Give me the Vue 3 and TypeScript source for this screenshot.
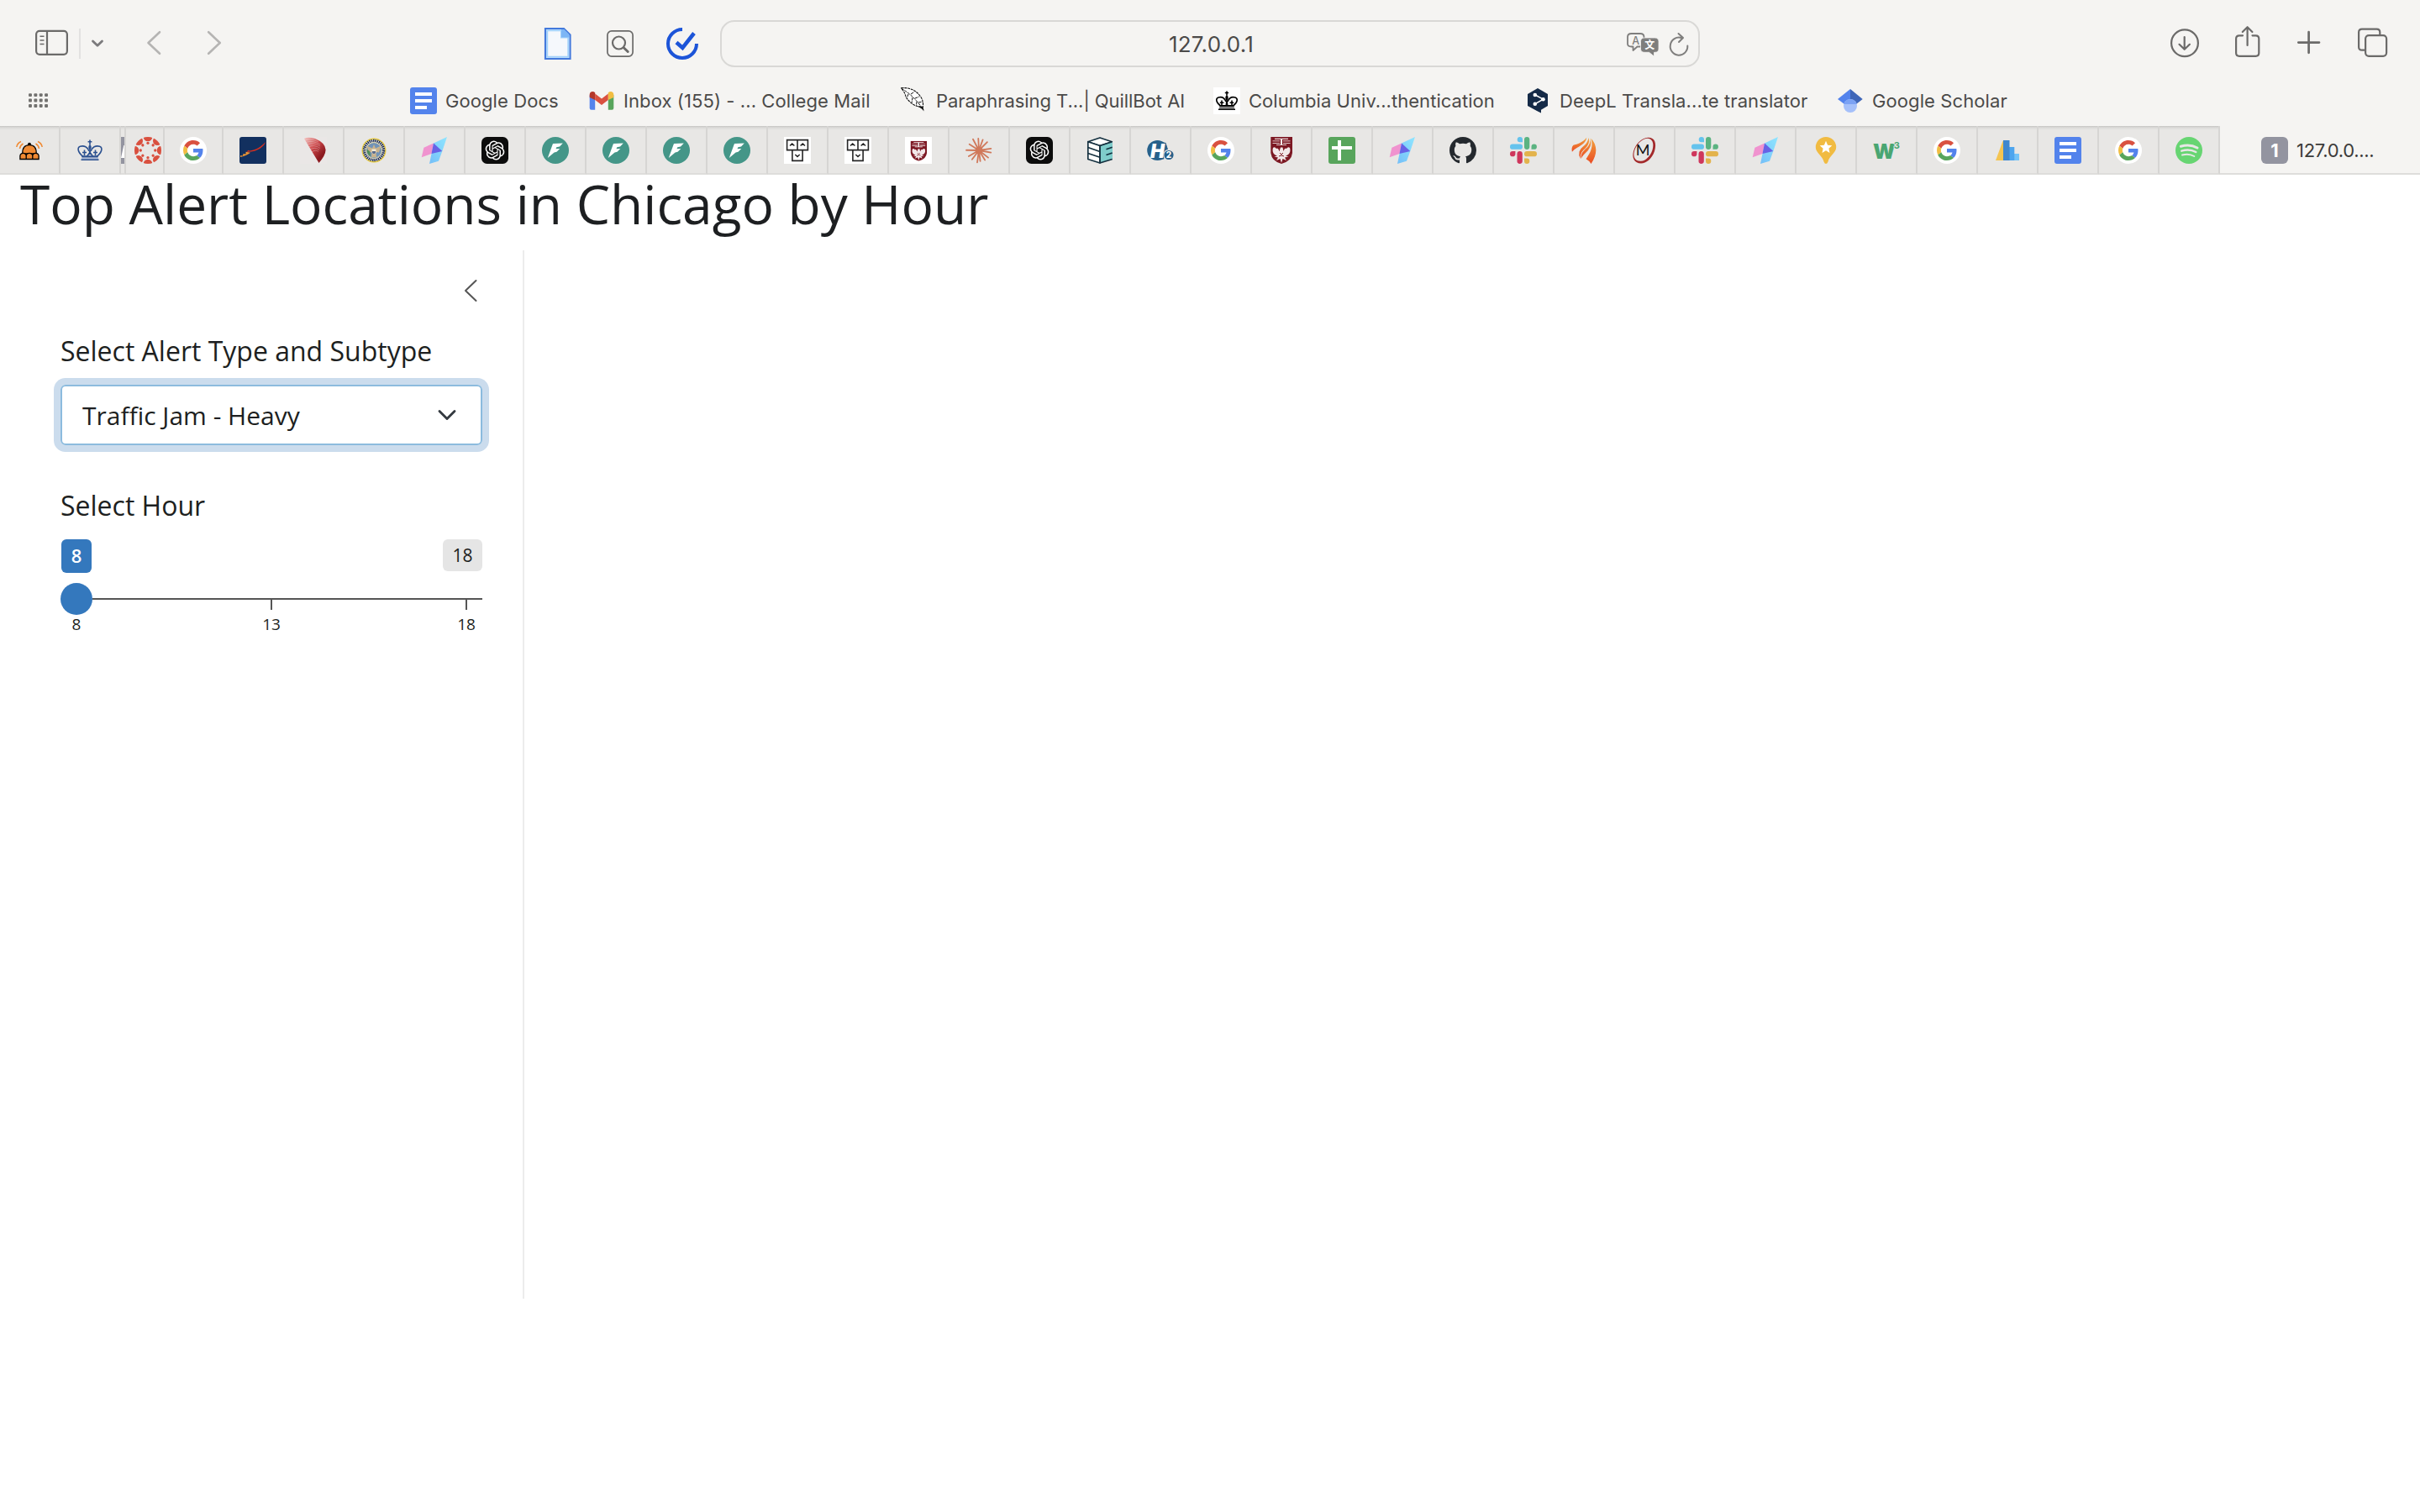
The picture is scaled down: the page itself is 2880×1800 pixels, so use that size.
<script setup lang="ts">
interface Tab {
  icon: string
  width: number
}
interface Bookmark {
  icon: string
  label: string
  spacing: number
}

const bookmarks: Bookmark[] = [
  { icon: 'docs', label: 'Google Docs', spacing: 0.08 },
  { icon: 'gmail', label: 'Inbox (155) - ... College Mail', spacing: 0.09 },
  { icon: 'quill', label: 'Paraphrasing T...| QuillBot AI', spacing: -0.05 },
  { icon: 'crown-black', label: 'Columbia Univ...thentication', spacing: 0.04 },
  { icon: 'deepl', label: 'DeepL Transla...te translator', spacing: 0.08 },
  { icon: 'scholar', label: 'Google Scholar', spacing: 0.1 },
]

const leading: Tab[] = [
  { icon: 'bell', width: 72 },
  { icon: 'crown', width: 72 },
  { icon: 'sliver', width: 6 },
  { icon: 'canvas', width: 46 },
  { icon: 'google', width: 70 },
]
const rest = [
  'navy', 'fan', 'seal', 'prism', 'openai', 'bolt', 'bolt', 'bolt', 'bolt', 'totem', 'totem',
  'chicago-white', 'burst', 'openai', 'cube', 'h2', 'google', 'chicago', 'sheet', 'prism', 'github',
  'slack', 'petals', 'ring', 'slack', 'prism', 'pin', 'w3', 'google', 'chart', 'docs', 'google', 'spotify',
]
const tabs: Tab[] = [...leading, ...rest.map((icon) => ({ icon, width: 72 }))]

const ring = [0, 45, 90, 135, 180, 225, 270, 315]
const rays: [number, number][] = [
  [-93, 14.5], [-70, 14], [-45, 14.5], [-8, 15], [10, 15], [38, 14.5], [58, 14],
  [83, 13.5], [98, 15], [127, 14], [150, 14.5], [181, 15.5], [213, 14], [242, 15.5],
]
const ticks = ['8', '13', '18']
</script>

<template>
  <svg class="defs" width="0" height="0">
    <defs>
      <linearGradient id="cy" x1="1" y1="0" x2="0" y2="1"><stop offset="0" stop-color="#8fe6ff" /><stop offset="1" stop-color="#74bff8" /></linearGradient>
      <linearGradient id="pe" x1="0" y1="0" x2="0" y2="1"><stop offset="0" stop-color="#f2a23c" /><stop offset="1" stop-color="#ea4c24" /></linearGradient>
      <linearGradient id="fa" x1="0.1" y1="0" x2="0.8" y2="0.7"><stop offset="0" stop-color="#f0b9b6" /><stop offset="0.5" stop-color="#cf4a4c" /><stop offset="1" stop-color="#8c1a20" /></linearGradient>
      <clipPath id="disc"><circle cx="16" cy="16" r="16" /></clipPath>
    </defs>
    <symbol id="bell" viewBox="0 0 32 32">
      <g fill="none" stroke="#f08a33" stroke-width="1.500"><path d="M.8 12Q1.500 7.500 6 5.500M4.500 14Q5 10 8.500 8M31.200 12Q30.500 7.500 26 5.500M27.500 14Q27 10 23.500 8" /></g>
      <circle cx="16" cy="8.700" r="2" />
      <path d="M7.800 20C7.500 13 10.500 9.600 16 9.600S24.500 13 24.200 20Z" fill="#f08a33" stroke="#000" stroke-width="1.300" />
      <path d="M4.900 26.500V22.500Q5.300 19.300 8.600 19.300T12.200 22.500Q12.500 19.300 16 19.300T19.800 22.500Q20 19.300 23.400 19.300T27.100 22.500V26.500ZM12.200 22V26.500M19.800 22V26.500" fill="#f08a33" stroke="#000" stroke-width="1.300" />
    </symbol>
    <symbol id="crown" viewBox="0 0 32 32">
      <g fill="none" stroke="#2c5190" stroke-width="1.600">
        <path d="M16 3.500V9M13.600 5.700H18.400M8 23.500C1 18 .8 12.500 4.500 11.300C9 10 13.500 12 15 17M24 23.500C31 18 31.200 12.500 27.500 11.300C23 10 18.500 12 17 17" />
        <path d="M9.500 15.500V22M7 18.500H12M22.500 15.500V22M20 18.500H25M12.500 23L16 18.500L19.500 23" />
      </g>
      <path d="M16 8.500Q19 12 16.800 15L17.200 21H14.800L15.200 15Q13 12 16 8.500Z" fill="#2c5190" />
      <path d="M6 22.200H26L25.500 24.500H6.500Z" fill="#2c5190" /><path d="M6 25H26V26.500H6Z" fill="#a9b9d8" /><path d="M5.500 26.400H26.500V28H5.500Z" fill="#2c5190" />
    </symbol>
    <symbol id="crown-black" viewBox="0 0 32 32">
      <rect width="32" height="32" fill="#fff" />
      <g fill="none" stroke="#000" stroke-width="1.600">
        <path d="M16 4.500V9M13.800 6.500H18.200M8.500 22C2.500 17.500 2.800 13 6 12C10 11 13.500 13 15 17M23.500 22C29.500 17.500 29.200 13 26 12C22 11 18.500 13 17 17" />
        <path d="M10 15.500V21.500M7.800 18.200H12.400M22 15.500V21.500M19.600 18.200H24.200" />
      </g>
      <path d="M16 8.500Q19 12 16.800 15L17.500 21.500H14.500L15.200 15Q13 12 16 8.500Z" />
      <path d="M7 21H25L24.500 23.200H7.500ZM7 24.200H25V25H7ZM6 25.600H26V27H6Z" />
    </symbol>
    <symbol id="canvas" viewBox="0 0 32 32">
      <g fill="#d9503f" clip-path="url(#disc)">
        <g v-for="a in ring" :key="a" :transform="`rotate(${a} 16 16)`"><circle cx="16" cy="0" r="5.300" /><circle cx="16" cy="7.300" r="1.650" /></g>
      </g>
    </symbol>
    <symbol id="google" viewBox="0 0 32 32">
      <circle cx="16" cy="16" r="16" fill="#fff" />
      <g transform="translate(4 4) scale(.5)">
        <path fill="#d95140" d="M24 9.500c3.540 0 6.710 1.220 9.210 3.600l6.850-6.850C35.900 2.380 30.470 0 24 0 14.620 0 6.510 5.380 2.560 13.220l7.980 6.190C12.430 13.720 17.740 9.500 24 9.500z" />
        <path fill="#5383ec" d="M46.980 24.550c0-1.570-.15-3.090-.38-4.550H24v9.020h12.940c-.58 2.960-2.260 5.480-4.780 7.180l7.730 6c4.510-4.180 7.090-10.360 7.090-17.650z" />
        <path fill="#f1bd42" d="M10.530 28.590c-.48-1.450-.76-2.990-.76-4.590s.27-3.140.76-4.590l-7.980-6.190C.92 16.460 0 20.120 0 24c0 3.880.92 7.540 2.560 10.780l7.970-6.190z" />
        <path fill="#58a55c" d="M24 48c6.480 0 11.930-2.130 15.890-5.810l-7.730-6c-2.150 1.450-4.920 2.300-8.160 2.300-6.260 0-11.570-4.220-13.470-9.910l-7.980 6.190C6.510 42.620 14.620 48 24 48z" />
      </g>
    </symbol>
    <symbol id="navy" viewBox="0 0 32 32">
      <rect width="32" height="32" rx="3" fill="#12305f" />
      <path d="M31 6C29.500 11 22 18.200 8.500 17.800L10.500 15.800L12 16.600C20 15.500 26 11.500 31 6Z" fill="#d8301f" />
      <path d="M1 24V22L4 22.500L4.500 20L7.500 20.500L7.500 17.800L13 18.800Q9 22 1 24Z" fill="#ec9433" />
    </symbol>
    <symbol id="fan" viewBox="0 0 32 32">
      <rect width="32" height="32" fill="#eae7e6" />
      <path d="M5 2Q9 -.5 18 2Q30 7 30.500 15Q31 21 22.500 31Z" fill="url(#fa)" />
      <g fill="none" stroke="#eae7e6" stroke-width=".6" opacity=".55"><path d="M6 4Q14 1 22 6M7 6.500Q15 3.500 24 9M9 9Q16 6 24 11M10 12Q17 8.500 24 13.500M12 15Q18 11.500 23 15.500M14 18Q19 14.500 22 17.500" /></g>
    </symbol>
    <symbol id="seal" viewBox="0 0 32 32">
      <circle cx="16" cy="16" r="13.700" fill="#fff" stroke="#e6c83c" stroke-width="1.500" />
      <circle cx="16" cy="16" r="11.500" fill="none" stroke="#1d2b4d" stroke-width="3.400" stroke-dasharray="1.500 .8" />
      <circle cx="16" cy="16" r="9.300" fill="#7193b8" stroke="#d8c98a" stroke-width=".8" />
      <path d="M7.500 10.500L14 13.500L16 9L18 13.500L24.500 10.500L22 18.500L18.500 18L19 24H13L13.500 18L10 18.500Z" fill="#c9b38d" />
      <path d="M13.500 14.500H18.500V18.500L16 21L13.500 18.500Z" fill="#f1ead8" /><path d="M14 17H18V19L16 20.500L14 19Z" fill="#5a6b8c" />
      <path d="M7.500 15Q8 21 12 23L11 17Z" fill="#4f8d55" />
    </symbol>
    <symbol id="prism" viewBox="0 0 32 32">
      <path d="M15 7.500L31 0L25.300 17L21 28.800L10 32L12.500 20Z" fill="url(#cy)" />
      <path d="M.7 24.300L3.400 12.700L15 7.500L12.500 20Z" fill="#f093cf" />
      <path d="M15 7.500L25.300 17L12.500 20Z" fill="#6662e6" />
    </symbol>
    <symbol id="openai" viewBox="0 0 32 32">
      <rect width="32" height="32" rx="6.500" fill="#0c0c0c" />
      <path transform="translate(4.600 4.600) scale(.95)" fill="#fff" d="M22.2819 9.8211a5.9847 5.9847 0 0 0-.5157-4.9108 6.0462 6.0462 0 0 0-6.5098-2.9A6.0651 6.0651 0 0 0 4.9807 4.1818a5.9847 5.9847 0 0 0-3.9977 2.9 6.0462 6.0462 0 0 0 .7427 7.0966 5.98 5.98 0 0 0 .511 4.9107 6.051 6.051 0 0 0 6.5146 2.9001A5.9847 5.9847 0 0 0 13.2599 24a6.0557 6.0557 0 0 0 5.7718-4.2058 5.9894 5.9894 0 0 0 3.9977-2.9001 6.0557 6.0557 0 0 0-.7475-7.0729zm-9.022 12.6081a4.4755 4.4755 0 0 1-2.8764-1.0408l.1419-.0804 4.7783-2.7582a.7948.7948 0 0 0 .3927-.6813v-6.7369l2.02 1.1686a.071.071 0 0 1 .038.052v5.5826a4.504 4.504 0 0 1-4.4945 4.4944zm-9.6607-4.1254a4.4708 4.4708 0 0 1-.5346-3.0137l.142.0852 4.783 2.7582a.7712.7712 0 0 0 .7806 0l5.8428-3.3685v2.3324a.0804.0804 0 0 1-.0332.0615L9.74 19.9502a4.4992 4.4992 0 0 1-6.1408-1.6464zM2.3408 7.8956a4.485 4.485 0 0 1 2.3655-1.9728V11.6a.7664.7664 0 0 0 .3879.6765l5.8144 3.3543-2.0201 1.1685a.0757.0757 0 0 1-.071 0l-4.8303-2.7865A4.504 4.504 0 0 1 2.3408 7.872zm16.5963 3.8558L13.1038 8.364 15.1192 7.2a.0757.0757 0 0 1 .071 0l4.8303 2.7913a4.4944 4.4944 0 0 1-.6765 8.1042v-5.6772a.79.79 0 0 0-.407-.667zm2.0107-3.0231l-.142-.0852-4.7735-2.7818a.7759.7759 0 0 0-.7854 0L9.409 9.2297V6.8974a.0662.0662 0 0 1 .0284-.0615l4.8303-2.7866a4.4992 4.4992 0 0 1 6.6802 4.66zM8.3065 12.863l-2.02-1.1638a.0804.0804 0 0 1-.038-.0567V6.0742a4.4992 4.4992 0 0 1 7.3757-3.4537l-.142.0805L8.704 5.459a.7948.7948 0 0 0-.3927.6813zm1.0976-2.3654l2.602-1.4998 2.6069 1.4998v2.9994l-2.5974 1.4997-2.6067-1.4997Z" />
    </symbol>
    <symbol id="bolt" viewBox="0 0 32 32">
      <circle cx="16" cy="16" r="16" fill="#449688" />
      <path d="M13 8L24.800 7.600L21 11.600L17.300 12.200L16.500 14.200L21.300 13.900L17.500 17.700L14.600 18.400L6.800 25Z" fill="#fff" />
    </symbol>
    <symbol id="totem" viewBox="0 0 32 32">
      <rect width="32" height="32" fill="#fff" />
      <path d="M3.600 3.600H28.400V15.600H3.600ZM16 3.600V15.600M9.900 15.600V28.400H22.100V15.600M7 10.500L9.700 8L12.400 10.500M19.600 10.500L22.300 8L25 10.500M13.300 21L16 23.500L18.700 21" fill="none" stroke="#262626" stroke-width="1.600" />
    </symbol>
    <symbol id="chicago" viewBox="0 0 32 32">
      <path d="M3.300 0H29V19Q28 29 16 32Q4.500 29 3.300 19Z" fill="#7c1823" />
      <g fill="#fff"><path d="M8 1.800H24V2.800H8ZM5.500 4.500H14V5.300H5.500ZM18 4.500H26.500V5.300H18ZM5.500 7H14V7.800H5.500ZM18 7H26.500V7.800H18ZM10 9H22V9.800H10ZM15 3H17V9H15Z" />
        <path d="M6 13Q8 11 10 14Q12 12 13.500 17L15 12.500H17.500L18.500 17Q20 12 22 14Q24 11 26 13Q28 20 21 22.500L24.500 23.500L20 24.500L22 28L17.500 26L16 31L14.500 26L10 28L12 24.500L7.500 23.500L11 22.500Q4 20 6 13Z" opacity=".9" /></g>
      <path d="M14 19L16 21L18 19M13 23L16 22L19 23" stroke="#7c1823" fill="none" />
    </symbol>
    <symbol id="chicago-white" viewBox="0 0 32 32"><rect width="32" height="32" fill="#fff" /><use href="#chicago" x="4.300" y="4.800" width="24" height="24" /></symbol>
    <symbol id="burst" viewBox="0 0 32 32">
      <g stroke="#d0785a" stroke-width="1.800" stroke-linecap="round"><line v-for="[a, r] in rays" :key="a" x1="16" y1="16" :x2="16 + (r - 0.5) * Math.cos((a * Math.PI) / 180)" :y2="16 + (r - 0.5) * Math.sin((a * Math.PI) / 180)" /></g>
      <circle cx="16" cy="16" r="4.500" fill="#d0785a" />
    </symbol>
    <symbol id="cube" viewBox="0 0 32 32">
      <g stroke="#14303f" stroke-width="1.700" stroke-linejoin="round">
        <path d="M16 1L30.300 5.700L16 10.500L1.800 5.700Z" fill="#fff" />
        <path d="M1.800 5.700L16 10.500V31L1.800 26.500Z" fill="#fff" />
      </g>
      <path d="M16.800 10.700L31 6.200V26.500L16.800 31Z" fill="#7fcdcb" />
      <path d="M1.800 12.500L16 17.500M1.800 19.500L16 24.300M30.500 5.700L16 10.500V31L30.700 26.500M23.500 14.800L30.700 12.300M23.500 21.500L30.700 19" fill="none" stroke="#14303f" stroke-width="1.700" stroke-linejoin="round" />
    </symbol>
    <symbol id="sheet" viewBox="0 0 32 32"><rect width="32" height="32" rx="3" fill="#58a55c" /><path d="M11 4H15V11H28V15H15V28H11V15H4V11H11Z" fill="#fff" /></symbol>
    <symbol id="github" viewBox="0 0 16 16"><path fill="#24292e" d="M8 0C3.580 0 0 3.580 0 8c0 3.540 2.290 6.530 5.470 7.590.4.070.55-.17.55-.38 0-.19-.01-.82-.01-1.490-2.010.37-2.530-.49-2.690-.94-.09-.23-.48-.94-.82-1.130-.28-.15-.68-.52-.01-.53.63-.01 1.080.58 1.230.82.72 1.210 1.870.87 2.330.66.07-.52.28-.87.51-1.070-1.780-.2-3.640-.89-3.640-3.950 0-.87.31-1.590.82-2.150-.08-.2-.36-1.020.08-2.120 0 0 .67-.21 2.200.82.64-.18 1.320-.27 2-.27s1.360.09 2 .27c1.530-1.040 2.200-.82 2.200-.82.44 1.100.16 1.920.08 2.120.51.56.82 1.270.82 2.150 0 3.070-1.870 3.750-3.650 3.950.29.25.54.73.54 1.480 0 1.070-.01 1.930-.01 2.200 0 .21.15.46.55.38A8.010 8.010 0 0 0 16 8c0-4.420-3.580-8-8-8z" /></symbol>
    <symbol id="slack" viewBox="0 0 32 32">
      <g fill="#65c3ed"><path d="M15 6.300H11.700A3.150 3.150 0 1 1 15 3.150Z" /><rect y="8.500" width="15" height="6.300" rx="3.150" /></g>
      <g fill="#5bb381"><rect x="17" width="6.300" height="15" rx="3.150" /><path d="M25.500 14.800V11.650A3.200 3.150 0 1 1 28.700 14.800Z" /></g>
      <g fill="#cf375c"><path d="M6.400 17V20.150A3.200 3.150 0 1 1 3.200 17Z" /><rect x="8.500" y="17" width="6.300" height="15" rx="3.150" /></g>
      <g fill="#e3b34c"><rect x="17" y="17" width="15" height="6.300" rx="3.150" /><path d="M17 25.600H20.150A3.150 3.200 0 1 1 17 28.800Z" /></g>
    </symbol>
    <symbol id="petals" viewBox="0 0 32 32">
      <g fill="url(#pe)">
        <path d="M1.900 17.800C1.200 14.500 1.500 11.500 3.500 9.800C8 8.800 15 6.500 19.200 .8C18.500 7 13 10 8 12.800Q4 15 1.900 17.800Z" />
        <path d="M21.500 1C23.500 8 19.500 12 15.500 15.500Q11.500 19.500 11.800 25.800Q9.500 22 10.500 17.500Q11.500 14 15 11.500Q20.500 7.500 21.500 1Z" />
        <path d="M23 1.300C25.500 8 24 12 20.500 16.500C17 20 14 22.500 12.600 26Q11.800 20 16.500 15.700C21 11.500 24.500 8.500 23 1.300Z" />
        <path d="M24.500 1.800C32 10 32.500 20 24.500 32Q22.500 28.500 18.500 26.300C23.500 19 27.500 12.500 24.500 1.800Z" />
      </g>
    </symbol>
    <symbol id="pin" viewBox="0 0 32 32">
      <path d="M16 0A12.200 12.200 0 0 1 28.200 12.200C28.200 19 20 22.500 18.500 29.500Q17.500 32 16 32T13.500 29.500C12 22.500 3.800 19 3.800 12.200A12.200 12.200 0 0 1 16 0Z" fill="#f1bb41" />
      <path d="M16 4.800L18.100 9.700L23.300 10.200L19.400 13.700L20.500 18.900L16 16.200L11.500 18.900L12.600 13.700L8.700 10.200L13.900 9.700Z" fill="#fff" />
    </symbol>
    <symbol id="chart" viewBox="0 0 32 32"><path d="M10.500 5L11 4.500V28H2Z" fill="#f4c451" /><path d="M22 20H30V28H22Z" fill="#74c4f8" /><path d="M17 12H24.300V28H17Z" fill="#4da5ee" /><path d="M11 4H18.500V12V28H11Z" fill="#3f87cf" /></symbol>
    <symbol id="docs" viewBox="0 0 32 32"><rect width="32" height="32" rx="3" fill="#5383ec" /><path d="M6 6H26V10H6ZM6 14H26V18H6ZM6 22H20V26H6Z" fill="#fff" /></symbol>
    <symbol id="spotify" viewBox="0 0 32 32"><circle cx="16" cy="16" r="16" fill="#67d572" /><g fill="none" stroke="#e8e7e6" stroke-linecap="round"><path d="M6.300 11.300Q17 8 26 13" stroke-width="3" /><path d="M7.300 16.600Q16.500 13.700 24.300 18" stroke-width="2.500" /><path d="M8 21.500Q16 19.200 22.300 23" stroke-width="2" /></g></symbol>
    <symbol id="gmail" viewBox="0 0 32 32">
      <path d="M1.700 9L8.200 14V26.700H3.700Q1.700 26.700 1.700 24.700Z" fill="#5383ec" /><path d="M30.300 9L23.800 14V26.700H28.300Q30.300 26.700 30.300 24.700Z" fill="#58a55c" />
      <path d="M8.200 7.500L16 13.500L23.800 7.500V15L16 21L8.200 15Z" fill="#d95140" />
      <path d="M1.700 12V8.500C1.700 5 5.500 4 8.200 6.200V15Z" fill="#b3372b" /><path d="M30.300 12V8.500C30.300 5 26.500 4 23.800 6.200V15Z" fill="#f1bd42" />
    </symbol>
    <symbol id="quill" viewBox="0 0 32 32">
      <path d="M.5 .8Q14 -.5 22 9Q28 16 26 24Q12 22 6 11Q5 6 .5 .8Z" fill="#fff" stroke="#111" stroke-width="1.100" stroke-dasharray="3 .8" />
      <path d="M.5 1.200Q16 10 27 27M9 8L7.500 12M14 12L13 18.500M19 17L18.500 22M12 8L16 5.500M17 13L22 11M21 18L26 17" fill="none" stroke="#111" stroke-width="1" stroke-dasharray="3.500 1" />
      <path d="M20 22L26.500 23L27.500 28.500L25.500 26Z" fill="#111" />
    </symbol>
    <symbol id="deepl" viewBox="0 0 32 32">
      <path d="M16 1L28 8V22L20 26.700V30.500L15 28L4 22V8Z" fill="#152a47" />
      <path d="M13 9L22.500 14.200L13 19.700" fill="none" stroke="#fff" stroke-width="1.500" /><g fill="#fff"><circle cx="12.800" cy="9" r="2.300" /><circle cx="22.500" cy="14.200" r="2.300" /><circle cx="12.800" cy="19.700" r="2.300" /></g>
    </symbol>
    <symbol id="scholar" viewBox="0 0 32 32"><path d="M16 2L1 14L9 20H16Z" fill="#5383ec" /><path d="M16 2L30.700 14L23 20H16Z" fill="#3f66b8" /><circle cx="16" cy="22" r="8" fill="#a5c0fa" /><path d="M8.300 20A8 8 0 0 1 23.700 20Z" fill="#7ba2f4" /></symbol>
  </svg>

  <div class="window">
    <header class="chrome">
      <div class="toolbar">
        <svg class="tool t-side" width="44" height="56" viewBox="40 24 44 56"><g fill="none" stroke="#6b6a69" stroke-width="2.200"><rect x="43.100" y="36.800" width="36.800" height="28" rx="4" /><path d="M56 37V65" /><path d="M47.500 43.300H52.500M47.500 48H52.500M47.500 52.500H52.500" stroke-width="1.500" /></g></svg>
        <svg class="tool t-menu" width="34" height="56" viewBox="92 24 34 56"><path d="M95 34V70" stroke="#e2e1e0" stroke-width="2" /><path d="M110.500 49L116 54.300L121.500 49" fill="none" stroke="#7b7a7c" stroke-width="2.800" stroke-linecap="round" stroke-linejoin="round" /></svg>
        <svg class="tool t-back" width="22" height="56" viewBox="172 24 22 56"><path d="M190 38.200L176.500 51L190 63.800" fill="none" stroke="#b5b4b3" stroke-width="2.600" stroke-linecap="round" stroke-linejoin="round" /></svg>
        <svg class="tool t-fwd" width="22" height="56" viewBox="244 24 22 56"><path d="M248.200 38.200L261.700 51L248.200 63.800" fill="none" stroke="#b5b4b3" stroke-width="2.600" stroke-linecap="round" stroke-linejoin="round" /></svg>
        <svg class="tool t-doc" width="36" height="56" viewBox="646 24 36 56"><path d="M649 34H671L678.500 41.500V70H649Z" fill="#f5f8fc" stroke="#4379dc" stroke-width="2.200" /><path d="M651.200 36.200H668V44.500H676.300V67.800H651.200Z" fill="none" stroke="#a3d2fb" stroke-width="2" /><path d="M668 35L671.500 35L677.500 41V44.500H668Z" fill="#7db6f5" /></svg>
        <svg class="tool t-find" width="36" height="56" viewBox="720 24 36 56"><g fill="none" stroke="#6b6a69"><rect x="722.900" y="36.900" width="30.200" height="30.200" rx="5" stroke-width="1.700" /><circle cx="736.500" cy="51" r="7.500" stroke-width="2.200" /><path d="M742.500 57L747.200 61.500" stroke-width="3" stroke-linecap="round" /></g></svg>
        <svg class="tool t-tick" width="40" height="56" viewBox="792 24 40 56"><g fill="none" stroke="#1c54d8"><path d="M812 35A17 17 0 1 0 829 52" stroke-width="4" /><path d="M805 50.500L812.300 57L826 39.500" stroke-width="4.600" /></g></svg>

        <div class="address">
          <span></span>
          <span class="host">127.0.0.1</span>
          <svg class="address-icons" width="80" height="52" viewBox="1932 26 80 52">
            <path d="M1941.500 40H1952Q1956.500 40 1956.500 44V52Q1956.500 55.500 1952 55.500H1948.500L1943.500 60V55.500H1941.500Q1937 55.500 1937 52V44Q1937 40 1941.500 40Z" fill="none" stroke="#7f7e7d" stroke-width="1.800" stroke-linejoin="round" />
            <text x="1946.700" y="52.500" font-family="Inter, sans-serif" font-size="12.500" font-weight="500" text-anchor="middle" fill="#7f7e7d">A</text>
            <path d="M1957 45H1969.500Q1974 45 1974 49.500V58Q1974 62.300 1969.500 62.300H1968.500V67L1962.500 62.300H1957Q1952.500 62.300 1952.500 58V49.500Q1952.500 45 1957 45Z" fill="#7f7e7d" stroke="#f5f4f2" stroke-width=".8" />
            <text x="1963.300" y="58.300" font-family="Noto Sans CJK SC, sans-serif" font-size="12" font-weight="700" text-anchor="middle" fill="#fff">文</text>
            <path d="M2001 45A10.300 10.600 0 1 0 2008.300 54.500M1997.500 40L2003 45L1998 50" fill="none" stroke="#7f7e7d" stroke-width="2" stroke-linecap="round" stroke-linejoin="round" />
          </svg>
        </div>

        <svg class="tool t-load" width="36" height="56" viewBox="2582 24 36 56"><g fill="none" stroke="#6b6a69" stroke-width="2.200" stroke-linecap="round" stroke-linejoin="round"><circle cx="2600" cy="51.200" r="15.900" /><path d="M2599.700 44V58.500M2593.500 52.800L2599.700 58.800L2605.900 52.800" /></g></svg>
        <svg class="tool t-share" width="34" height="56" viewBox="2658 24 34 56"><g fill="none" stroke="#6b6a69" stroke-width="2.200" stroke-linecap="round" stroke-linejoin="round"><path d="M2669 42.300H2665Q2661.100 42.300 2661.100 46V63Q2661.100 66.800 2665 66.800H2684.500Q2688.300 66.800 2688.300 63V46Q2688.300 42.300 2684.500 42.300H2680.500M2674.600 54V32.500M2668.800 38L2674.600 32.200L2680.400 38" /></g></svg>
        <svg class="tool t-plus" width="32" height="56" viewBox="2732 24 32 56"><path d="M2735.300 50.600H2760M2747.600 38.200V62.800" stroke="#6b6a69" stroke-width="2.700" stroke-linecap="round" /></svg>
        <svg class="tool t-tabs" width="40" height="56" viewBox="2804 24 40 56"><g fill="none" stroke="#6b6a69" stroke-width="2.200"><path d="M2814 59.700H2811Q2807.100 59.700 2807.100 56V38.500Q2807.100 34.600 2811 34.600H2828.500Q2832.300 34.600 2832.300 38.500V41.500" /><rect x="2815.100" y="42.100" width="25" height="24.700" rx="4" /></g></svg>
      </div>

      <nav class="bookmarks">
        <svg class="apps" width="24" height="20" viewBox="34 111 24 20"><g fill="#72716f"><template v-for="r in 3" :key="r"><rect v-for="c in 4" :key="c" :x="27.700 + c * 6.350" :y="105.800 + r * 6.400" width="3.900" height="3.900" rx="1" /></template></g></svg>
        <div class="marks">
          <a v-for="b in bookmarks" :key="b.label" class="mark">
            <svg width="32" height="32"><use :href="`#${b.icon}`" /></svg>
            <span :style="{ letterSpacing: b.spacing + 'px' }">{{ b.label }}</span>
          </a>
        </div>
      </nav>

      <div class="tabs">
        <div v-for="(t, i) in tabs" :key="i" class="tab" :class="`tab-${t.icon}`" :style="{ width: t.width + 'px' }">
          <svg v-if="t.icon === 'sliver'" width="4" height="32" viewBox="0 0 4 32"><rect width="4" height="32" fill="#9394a0" /><path d="M0 25L3.300 10H4V25H2.500Z" fill="#fff" /></svg>
          <svg v-else-if="t.icon === 'h2'" width="32" height="32" viewBox="0 0 32 32">
            <ellipse cx="12.500" cy="16" rx="12.300" ry="12" fill="#27618b" />
            <path d="M19.500 6.500L22.500 7L24.500 15L20 26.500H15Z" fill="#27618b" />
            <text x="12.500" y="24.500" font-family="Inter, sans-serif" font-weight="900" font-style="italic" font-size="22.500" text-anchor="middle" fill="#fff">H</text>
            <circle cx="26" cy="21.500" r="6.200" fill="#27618b" stroke="#e8e7e6" stroke-width="1.200" />
            <text x="26" y="25" font-family="Inter, sans-serif" font-weight="800" font-size="10" text-anchor="middle" fill="#fff">2</text>
          </svg>
          <svg v-else-if="t.icon === 'ring'" width="32" height="32" viewBox="0 0 32 32">
            <path fill-rule="evenodd" fill="#a3292a" d="M20 .7C28 .2 31 7 28 17C25 26 18 31.500 12 31.500C4 31.500 .8 25 3 17C5.500 8 13 1 20 .7ZM19 1.800C13 2.200 6.300 9 4 17C2 24.500 5.500 29.300 12 28.800C17.500 28.500 23 23 25.500 15.500C28 7 25 1.500 19 1.800Z" />
            <text x="14" y="22.300" font-family="Lato, sans-serif" font-size="18" text-anchor="middle" fill="#111">M</text>
          </svg>
          <svg v-else-if="t.icon === 'w3'" width="32" height="32" viewBox="0 0 32 32">
            <text x="0" y="26.300" font-family="Inter, sans-serif" font-weight="900" font-size="25" textLength="26.500" lengthAdjust="spacingAndGlyphs" fill="#4aa672">W</text>
            <text x="28.200" y="14" font-family="Inter, sans-serif" font-weight="700" font-size="11" text-anchor="middle" fill="#4aa672" stroke="#e8e7e6" stroke-width="1.500" paint-order="stroke">3</text>
          </svg>
          <svg v-else width="32" height="32"><use :href="`#${t.icon}`" /></svg>
        </div>
        <div class="tab-active">
          <span class="count">1</span>
          <span class="tab-title">127.0.0....</span>
        </div>
      </div>
    </header>

    <main class="page">
      <h1>Top Alert Locations in Chicago by Hour</h1>
      <aside class="sidebar">
        <div class="collapse">
          <svg width="18" height="30" viewBox="0 0 18 30"><path d="M15.500 3L3 15L15.500 27" fill="none" stroke="#555" stroke-width="2" stroke-linecap="round" stroke-linejoin="round" /></svg>
        </div>
        <label class="label">Select Alert Type and Subtype</label>
        <div class="select">
          <span>Traffic Jam - Heavy</span>
          <svg width="24" height="24" viewBox="0 0 16 16"><path d="m2 5 6 6 6-6" fill="none" stroke="#343a40" stroke-width="1.900" stroke-linecap="round" stroke-linejoin="round" /></svg>
        </div>
        <label class="label label-hour">Select Hour</label>
        <div class="slider">
          <div class="badges"><span class="value">8</span><span class="max">18</span></div>
          <div class="track"><i class="knob"></i><i class="line"></i></div>
          <div class="grid">
            <div v-for="t in ticks" :key="t" class="tick"><i></i><span>{{ t }}</span></div>
          </div>
        </div>
      </aside>
    </main>
  </div>
</template>

<style>
body {
  margin: 0;
  background: #fff;
}
</style>

<style scoped>
.defs {
  position: absolute;
}
.window {
  width: 2880px;
  height: 1800px;
  overflow: hidden;
  background: #fff;
}
svg {
  display: block;
  flex: none;
}
.chrome {
  height: 208px;
  background: #f5f4f2;
  font-family: Inter, 'Liberation Sans', sans-serif;
  color: #4b4a49;
}
.toolbar {
  display: flex;
  height: 56px;
  padding: 24px 0 0 40px;
}
.t-menu { margin-left: 8px; }
.t-back { margin-left: 46px; }
.t-fwd { margin-left: 50px; }
.t-doc { margin-left: 380px; }
.t-find { margin-left: 38px; }
.t-tick { margin-left: 36px; }
.t-load { margin-left: 559px; }
.t-share { margin-left: 40px; }
.t-plus { margin-left: 40px; }
.t-tabs { margin-left: 40px; }
.address {
  display: grid;
  grid-template-columns: 1fr auto 1fr;
  align-items: center;
  box-sizing: border-box;
  width: 1166px;
  height: 56px;
  margin-left: 25px;
  border: 2px solid #d9d8d6;
  border-radius: 17px;
}
.host {
  padding: 2px 0 0 3px;
  font-size: 26px;
  line-height: 50px;
  letter-spacing: 0.25px;
}
.address-icons {
  justify-self: end;
  margin-right: 9px;
}
.bookmarks {
  display: flex;
  align-items: center;
  box-sizing: border-box;
  height: 70px;
  padding: 10px 0 0 34px;
}
.marks {
  display: grid;
  grid-template-columns: 212px 372px 372px 370px 372px 300px;
  margin-left: 430px;
}
.mark {
  display: flex;
  align-items: center;
  gap: 10px;
  font-size: 22px;
  line-height: 32px;
  white-space: pre;
}
.mark span {
  margin-top: -1px;
}
.tabs {
  display: flex;
  height: 58px;
}
.tab {
  display: flex;
  flex: none;
  justify-content: center;
  box-sizing: border-box;
  height: 58px;
  padding-top: 13px;
  border-right: 2px solid #d6d5d3;
  border-bottom: 2px solid #dedddb;
  background: linear-gradient(#c6c5c3, #dcdbd9 2px, #e8e7e5 5px, #e8e7e5);
}
.tab-canvas {
  padding-left: 8px;
}
.tab-active {
  display: flex;
  flex: 1;
  box-sizing: border-box;
  height: 58px;
  padding: 13px 0 0 49px;
  border-bottom: 2px solid #dedddb;
}
.count {
  width: 32px;
  height: 32px;
  border-radius: 6px;
  background: #9394a0;
  color: #fff;
  font-size: 22px;
  font-weight: 700;
  line-height: 33px;
  text-align: center;
}
.tab-title {
  margin-left: 10px;
  color: #3c3b3a;
  font-size: 22px;
  line-height: 32px;
  letter-spacing: -0.3px;
}
.page {
  color: #1d1f21;
  font-family: 'Open Sans', 'Noto Sans', sans-serif;
}
h1 {
  box-sizing: border-box;
  height: 90px;
  margin: 0;
  padding-left: 24px;
  font-size: 64px;
  font-weight: 400;
  line-height: 70px;
}
.sidebar {
  box-sizing: border-box;
  width: 624px;
  height: 1248px;
  padding: 33px 48px 0 72px;
  border-right: 2px solid #ececec;
}
.collapse {
  display: flex;
  justify-content: flex-end;
  height: 30px;
  padding-right: 5px;
}
.label {
  display: block;
  height: 50px;
  margin-top: 33px;
  font-size: 32px;
  line-height: 48px;
}
.select {
  display: flex;
  align-items: center;
  justify-content: space-between;
  box-sizing: border-box;
  height: 72px;
  margin-top: 14px;
  padding: 0 28px 0 24px;
  border: 2px solid #8cbbde;
  border-radius: 6px;
  box-shadow: 0 0 0 8px #cbdced;
  font-size: 30px;
}
.label-hour {
  margin-top: 48px;
}
.slider {
  margin-top: 14px;
}
.badges {
  display: flex;
  align-items: flex-start;
  justify-content: space-between;
  height: 52px;
}
.value {
  width: 36px;
  height: 40px;
  margin-left: 1px;
  border-radius: 6px;
  background: #3478bd;
  color: #fff;
  font-size: 22px;
  font-weight: 600;
  line-height: 39px;
  text-align: center;
}
.max {
  width: 47px;
  height: 38px;
  border-radius: 6px;
  background: #e5e5e5;
  font-size: 21px;
  line-height: 38px;
  text-align: center;
}
.track {
  display: flex;
  align-items: center;
  height: 38px;
}
.knob {
  width: 38px;
  height: 38px;
  border-radius: 50%;
  background: #3478bd;
}
.line {
  flex: 1;
  height: 2px;
  background: #555;
}
.grid {
  display: flex;
  justify-content: space-between;
  margin-top: -18px;
}
.tick {
  display: flex;
  flex-direction: column;
  align-items: center;
  width: 38px;
  font-size: 19px;
  line-height: 24px;
}
.tick i {
  width: 2px;
  height: 12px;
  background: #555;
}
.tick:first-child i {
  background: transparent;
}
.tick span {
  margin-top: 5px;
}
</style>
